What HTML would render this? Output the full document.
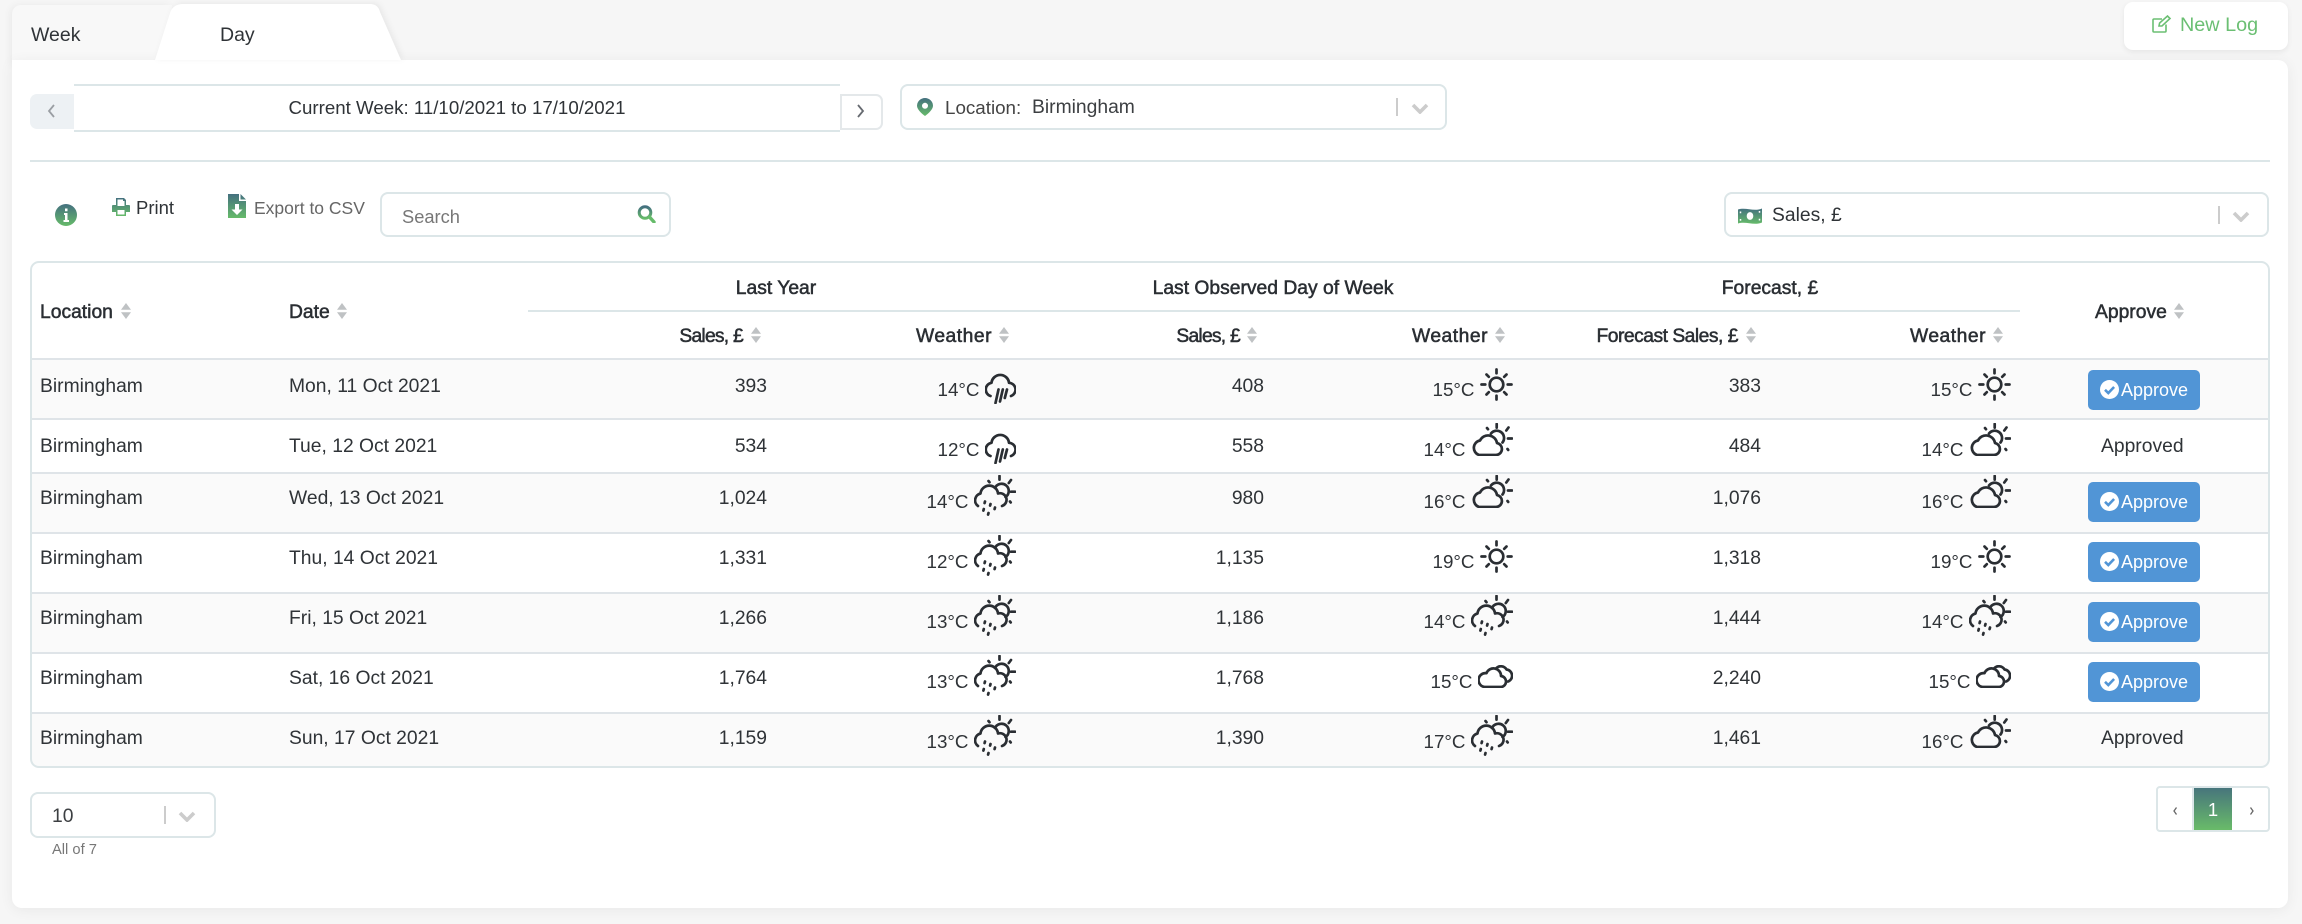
<!DOCTYPE html>
<html lang="en">
<head>
<meta charset="utf-8">
<title>Sales Log</title>
<style>
html,body{margin:0;padding:0}
body{width:2302px;height:924px;position:relative;overflow:hidden;background:#f6f6f6;font-family:"Liberation Sans",sans-serif;color:#2f3337;font-size:19.3px}
.a,.t,.r>*{position:absolute}
.t,.r>span{white-space:nowrap;line-height:24px}
.r{position:absolute;left:0;width:2302px;height:0}
.r>.l{left:40px;top:-17.5px}
.r>.d{left:289px;top:-17.5px}
.r>.n{top:-17.5px}
.r>.c{top:-14px;font-size:18.8px}
.n1{right:1535px}.n2{right:1038px}.n3{right:541px}
.ic{fill:none;stroke:#2a2e33;stroke-width:2.7;stroke-linecap:round;stroke-linejoin:round;overflow:visible}
.rain{top:-19px;width:31px;height:31px}
.sun{top:-24px;width:33px;height:33px}
.cs{top:-29px;width:42px;height:33px}
.rs{top:-29px;width:42px;height:42px}
.cl{top:-19px;width:35px;height:23px}
.btn{left:2088px;top:-22px;width:112px;height:40px;background:#5195d6;border-radius:5px;color:#fff}
.btn svg{position:absolute;left:12px;top:10px;width:19px;height:19px}
.btn b{position:absolute;left:33px;top:8px;font-weight:normal;font-size:18px;line-height:24px}
.ok{left:2101px;top:-17.5px}
.h{font-size:19.3px;-webkit-text-stroke:.5px #2a2e33;color:#2a2e33}
.w{letter-spacing:.5px}
.s{letter-spacing:-.75px}
.line{position:absolute;left:32px;width:2236px;height:2px;background:#dfe4e8}
.bg{position:absolute;left:32px;width:2236px;background:#fafafa}
.box{position:absolute;box-sizing:border-box;border:2px solid #dce6e8;border-radius:8px;background:#fff}
.sep{position:absolute;width:2px;background:#ccc}
.sort{position:absolute;width:12px;height:16px}
</style>
</head>
<body>
<svg width="0" height="0" style="position:absolute">
<defs>
<linearGradient id="g" x1="0" y1="0" x2="0" y2="1"><stop offset="0" stop-color="#44707f"/><stop offset="1" stop-color="#66bb6a"/></linearGradient>
<symbol id="sun" viewBox="0 0 33 33"><circle cx="16.5" cy="16.5" r="6.8"/><path d="M16.5 1.5v3.8M16.5 27.7v3.8M1.5 16.5h3.8M27.700 16.5h3.800M6.500 6.500l2.300 2.300M26.500 6.500l-2.300 2.300M6.500 26.500l2.300-2.300M26.500 26.500l-2.300-2.300"/></symbol>
<symbol id="cs" viewBox="0 0 42 33"><path d="M8 32H25a6 6 0 0 0 1-11.9a9 9 0 0 0-17-2.600a7.500 7.500 0 0 0-1 14.500z"/><path d="M20 10.500A7 7 0 1 1 31.500 19.500"/><path d="M25.700 1v3.600M37.500 4.500l-2.200 3M37 15.500h4M16 5l1 1.200M36.500 26l.7 .9"/></symbol>
<symbol id="rs" viewBox="0 0 42 42"><path d="M4 31A7 7 0 0 1 6.500 18.500A8.800 8.800 0 0 1 24 18.500A6.500 6.500 0 0 1 28 31"/><path d="M21 13A7.200 7.200 0 1 1 31.500 22"/><path d="M25.500 1v3.600M37 5l-2.200 3M37 16.700h4M14.500 6l1 1.200M36 26.500l.7 .9M11 26.500l-.4 1.600M16.500 29l-.4 1.600M21 32.500l-.4 1.600M9.800 34l-.4 1.600M14.500 38l-.4 1.600"/></symbol>
<symbol id="rain" viewBox="0 0 31 31"><path d="M5.500 23A6.800 6.800 0 0 1 6.500 9.800A8.800 8.800 0 0 1 24 9.800A6.800 6.800 0 0 1 26 23"/><path d="M13.500 16.500L10.500 30M17.800 16.500L15 28.500M22 16.500L19.800 25"/></symbol>
<symbol id="cl" viewBox="0 0 35 23"><path d="M6.500 22H22a5.500 5.500 0 0 0 1-11a7.500 7.500 0 0 0-14.500-2.800a6.500 6.500 0 0 0-2 13.800z"/><path d="M18 3.500A6.500 6.500 0 0 1 28.500 4.500A6.200 6.200 0 0 1 30 16.500"/></symbol>
<symbol id="ck" viewBox="0 0 19 19"><circle cx="9.500" cy="9.500" r="9.500" fill="#fff"/><path d="M5 9.800l3.300 3.200 5.800-6" fill="none" stroke="#5195d6" stroke-width="2.600"/></symbol>
<symbol id="so" viewBox="0 0 12 16"><path d="M6 0l5 6.800H1zM6 16l-5-6.800h10z" fill="#bfc2c4"/></symbol>
<symbol id="chev" viewBox="0 0 18 11"><path d="M2 2l7 7 7-7" fill="none" stroke="#ccc" stroke-width="3.600"/></symbol>
</defs>
</svg>

<!-- tabs -->
<div class="a" style="left:12px;top:5px;width:160px;height:60px;background:#f8f8f8;border-radius:9px 0 0 0;box-shadow:-2px 0 8px rgba(0,0,0,.05)"></div>
<!-- card -->
<div class="a" style="left:12px;top:60px;width:2276px;height:848px;background:#fff;border-radius:0 10px 10px 10px;box-shadow:0 2px 14px rgba(0,0,0,.06)"></div>
<svg class="a" style="left:145px;top:0;filter:drop-shadow(2px -1px 3px rgba(0,0,0,.06))" width="270" height="61" viewBox="0 0 270 61"><path d="M10 60L25 13Q28 4 38 4H225Q233 4 235 12L256 60z" fill="#fff"/></svg>
<div class="t" style="left:31px;top:23px;font-size:19.500px">Week</div>
<div class="t" style="left:220px;top:23px;font-size:19.500px">Day</div>

<!-- new log -->
<div class="a" style="left:2124px;top:2px;width:164px;height:48px;background:#fff;border-radius:9px;box-shadow:0 2px 6px rgba(0,0,0,.07)"></div>
<svg class="a" style="left:2152px;top:15px" width="20" height="18" viewBox="0 0 20 18" fill="none" stroke="#6bbf73" stroke-width="1.600"><path d="M14 9.500V16a1 1 0 0 1-1 1H2a1 1 0 0 1-1-1V5a1 1 0 0 1 1-1h8"/><path d="M7 11l.6-3L15.500 1l2.500 2.500L10 11z"/></svg>
<div class="t" style="left:2180px;top:12.500px;font-size:19.800px;color:#6bbf73">New Log</div>

<!-- week nav -->
<div class="a" style="left:30px;top:94px;width:44px;height:35px;background:#edf1f4;border-radius:7px 0 0 7px"></div>
<svg class="a" style="left:46px;top:103px" width="10" height="16" viewBox="0 0 10 16"><path d="M8 2L3 8l5 6" fill="none" stroke="#9a9ea3" stroke-width="1.800"/></svg>
<div class="a" style="left:74px;top:84px;width:766px;height:44px;border-top:2px solid #dce6e8;border-bottom:2px solid #dce6e8"></div>
<div class="t" style="left:74px;width:766px;top:96px;text-align:center;font-size:18.700px">Current Week: 11/10/2021 to 17/10/2021</div>
<div class="a" style="left:840px;top:94px;width:43px;height:36px;box-sizing:border-box;border:2px solid #e4e8ea;border-radius:0 7px 7px 0"></div>
<svg class="a" style="left:856px;top:103px" width="10" height="16" viewBox="0 0 10 16"><path d="M2 2l5 6-5 6" fill="none" stroke="#666a70" stroke-width="1.800"/></svg>

<!-- location select -->
<div class="box" style="left:900px;top:84px;width:547px;height:46px"></div>
<svg class="a" style="left:916px;top:98px" width="18" height="18" viewBox="0 0 18 18"><path fill="url(#g)" fill-rule="evenodd" d="M9 0a8 8 0 0 1 8 7.800c0 3.600-4.500 7.800-8 10.200C5.500 15.600 1 11.400 1 7.800A8 8 0 0 1 9 0zm0 4.800a3 3 0 1 0 .01 0z"/></svg>
<div class="t" style="left:945px;top:96px;font-size:18.800px;color:#444">Location:</div>
<div class="t" style="left:1032px;top:96px;font-size:19.300px;color:#3c3f42">Birmingham</div>
<div class="sep" style="left:1396px;top:98px;height:18px"></div>
<svg class="a" style="left:1411px;top:103px" width="18" height="11"><use href="#chev"/></svg>

<div class="a" style="left:30px;top:160px;width:2240px;height:2px;background:#dce6e8"></div>

<!-- toolbar -->
<svg class="a" style="left:55px;top:204px" width="22" height="22" viewBox="0 0 22 22"><circle cx="11" cy="11" r="11" fill="url(#g)"/><path d="M9 9h3.500v7H14v2H8.500v-2H10v-5H9zM10 4.500h2.500v2.800H10z" fill="#fff"/></svg>
<svg class="a" style="left:112px;top:198px" width="18" height="18" viewBox="0 0 18 18"><path fill="url(#g)" fill-rule="evenodd" d="M4 0h8l2 2v5h3a1 1 0 0 1 1 1v6h-4v4H4v-4H0V8a1 1 0 0 1 1-1h3zm1.500 1.500V8h7V3h-1.500V1.500zM5.500 12v4.500h7V12z"/></svg>
<div class="t" style="left:136px;top:195.500px;font-size:18.500px">Print</div>
<svg class="a" style="left:228px;top:194px" width="18" height="24" viewBox="0 0 18 24"><path fill="url(#g)" fill-rule="evenodd" d="M0 0h11v7h7v17H0zM12.500 0L18 5.500h-5.500zM7 10v5.500H3.500L9 21l5.500-5.500H11V10z"/></svg>
<div class="t" style="left:254px;top:195.500px;font-size:17.500px;color:#666">Export to CSV</div>
<div class="box" style="left:380px;top:192px;width:291px;height:45px"></div>
<div class="t" style="left:402px;top:205px;font-size:18.300px;color:#777">Search</div>
<svg class="a" style="left:637px;top:205px" width="19" height="18" viewBox="0 0 19 18"><circle cx="8" cy="7.500" r="5.800" fill="none" stroke="url(#g)" stroke-width="3"/><path d="M12.500 12l4.500 5" stroke="#66bb6a" stroke-width="3.400" stroke-linecap="round"/></svg>

<div class="box" style="left:1724px;top:192px;width:545px;height:45px"></div>
<svg class="a" style="left:1738px;top:207px" width="24" height="18" viewBox="0 0 24 18"><path fill="url(#g)" d="M0 2.500C8 0 16 5 24 1.500V15.500C16 19 8 14 0 16.500z"/><ellipse cx="12" cy="9" rx="3.300" ry="3.900" fill="#fff"/><path d="M2.500 4.500v1.800M21.500 4v1.800M2.500 12v1.800M21.500 11.700v1.800" stroke="#fff" stroke-width="1.500"/></svg>
<div class="t" style="left:1772px;top:204px;font-size:19.300px">Sales, £</div>
<div class="sep" style="left:2218px;top:206px;height:18px"></div>
<svg class="a" style="left:2232px;top:211px" width="18" height="11"><use href="#chev"/></svg>

<!-- table -->
<div class="bg" style="top:360px;height:58px"></div>
<div class="bg" style="top:474px;height:58px"></div>
<div class="bg" style="top:594px;height:58px"></div>
<div class="bg" style="top:714px;height:52px;border-radius:0 0 7px 7px"></div>
<div class="line" style="top:358px"></div>
<div class="line" style="top:418px"></div>
<div class="line" style="top:472px"></div>
<div class="line" style="top:532px"></div>
<div class="line" style="top:592px"></div>
<div class="line" style="top:652px"></div>
<div class="line" style="top:712px"></div>
<div class="a" style="left:30px;top:261px;width:2240px;height:507px;box-sizing:border-box;border:2px solid #dce6e8;border-radius:9px"></div>
<div class="a" style="left:528px;top:310px;width:1492px;height:2px;background:#dce6e8"></div>

<!-- header -->
<div class="t h" style="left:40px;top:300.500px">Location</div>
<svg class="sort" style="left:120px;top:303px"><use href="#so"/></svg>
<div class="t h" style="left:289px;top:300.500px">Date</div>
<svg class="sort" style="left:336px;top:303px"><use href="#so"/></svg>
<div class="t h" style="left:676px;width:200px;text-align:center;top:277px">Last Year</div>
<div class="t h" style="left:1073px;width:400px;text-align:center;top:277px">Last Observed Day of Week</div>
<div class="t h" style="left:1620px;width:300px;text-align:center;top:277px">Forecast, £</div>
<div class="t h s" style="right:1559px;top:324.500px">Sales, £</div>
<svg class="sort" style="left:750px;top:327px"><use href="#so"/></svg>
<div class="t h w" style="right:1310px;top:324.500px">Weather</div>
<svg class="sort" style="left:998px;top:327px"><use href="#so"/></svg>
<div class="t h s" style="right:1062px;top:324.500px">Sales, £</div>
<svg class="sort" style="left:1246px;top:327px"><use href="#so"/></svg>
<div class="t h w" style="right:814px;top:324.500px">Weather</div>
<svg class="sort" style="left:1494px;top:327px"><use href="#so"/></svg>
<div class="t h" style="right:564px;top:324.500px;letter-spacing:-.5px">Forecast Sales, £</div>
<svg class="sort" style="left:1745px;top:327px"><use href="#so"/></svg>
<div class="t h w" style="right:316px;top:324.500px">Weather</div>
<svg class="sort" style="left:1992px;top:327px"><use href="#so"/></svg>
<div class="t h" style="left:2095px;top:300.500px">Approve</div>
<svg class="sort" style="left:2173px;top:303px"><use href="#so"/></svg>

<!-- rows -->
<div class="r" style="top:392px">
<span class="l">Birmingham</span><span class="d">Mon, 11 Oct 2021</span>
<span class="n n1">393</span><span class="c" style="right:1322.500px">14°C</span><svg class="ic rain" style="right:1286px"><use href="#rain"/></svg>
<span class="n n2">408</span><span class="c" style="right:827.500px">15°C</span><svg class="ic sun" style="right:789px"><use href="#sun"/></svg>
<span class="n n3">383</span><span class="c" style="right:329.500px">15°C</span><svg class="ic sun" style="right:291px"><use href="#sun"/></svg>
<div class="btn"><svg><use href="#ck"/></svg><b>Approve</b></div>
</div>
<div class="r" style="top:452px">
<span class="l">Birmingham</span><span class="d">Tue, 12 Oct 2021</span>
<span class="n n1">534</span><span class="c" style="right:1322.500px">12°C</span><svg class="ic rain" style="right:1286px"><use href="#rain"/></svg>
<span class="n n2">558</span><span class="c" style="right:836.500px">14°C</span><svg class="ic cs" style="right:789px"><use href="#cs"/></svg>
<span class="n n3">484</span><span class="c" style="right:338.500px">14°C</span><svg class="ic cs" style="right:291px"><use href="#cs"/></svg>
<span class="ok">Approved</span>
</div>
<div class="r" style="top:504px">
<span class="l">Birmingham</span><span class="d">Wed, 13 Oct 2021</span>
<span class="n n1">1,024</span><span class="c" style="right:1333.500px">14°C</span><svg class="ic rs" style="right:1286px"><use href="#rs"/></svg>
<span class="n n2">980</span><span class="c" style="right:836.500px">16°C</span><svg class="ic cs" style="right:789px"><use href="#cs"/></svg>
<span class="n n3">1,076</span><span class="c" style="right:338.500px">16°C</span><svg class="ic cs" style="right:291px"><use href="#cs"/></svg>
<div class="btn"><svg><use href="#ck"/></svg><b>Approve</b></div>
</div>
<div class="r" style="top:564px">
<span class="l">Birmingham</span><span class="d">Thu, 14 Oct 2021</span>
<span class="n n1">1,331</span><span class="c" style="right:1333.500px">12°C</span><svg class="ic rs" style="right:1286px"><use href="#rs"/></svg>
<span class="n n2">1,135</span><span class="c" style="right:827.500px">19°C</span><svg class="ic sun" style="right:789px"><use href="#sun"/></svg>
<span class="n n3">1,318</span><span class="c" style="right:329.500px">19°C</span><svg class="ic sun" style="right:291px"><use href="#sun"/></svg>
<div class="btn"><svg><use href="#ck"/></svg><b>Approve</b></div>
</div>
<div class="r" style="top:624px">
<span class="l">Birmingham</span><span class="d">Fri, 15 Oct 2021</span>
<span class="n n1">1,266</span><span class="c" style="right:1333.500px">13°C</span><svg class="ic rs" style="right:1286px"><use href="#rs"/></svg>
<span class="n n2">1,186</span><span class="c" style="right:836.500px">14°C</span><svg class="ic rs" style="right:789px"><use href="#rs"/></svg>
<span class="n n3">1,444</span><span class="c" style="right:338.500px">14°C</span><svg class="ic rs" style="right:291px"><use href="#rs"/></svg>
<div class="btn"><svg><use href="#ck"/></svg><b>Approve</b></div>
</div>
<div class="r" style="top:684px">
<span class="l">Birmingham</span><span class="d">Sat, 16 Oct 2021</span>
<span class="n n1">1,764</span><span class="c" style="right:1333.500px">13°C</span><svg class="ic rs" style="right:1286px"><use href="#rs"/></svg>
<span class="n n2">1,768</span><span class="c" style="right:829.500px">15°C</span><svg class="ic cl" style="right:789px"><use href="#cl"/></svg>
<span class="n n3">2,240</span><span class="c" style="right:331.500px">15°C</span><svg class="ic cl" style="right:291px"><use href="#cl"/></svg>
<div class="btn"><svg><use href="#ck"/></svg><b>Approve</b></div>
</div>
<div class="r" style="top:744px">
<span class="l">Birmingham</span><span class="d">Sun, 17 Oct 2021</span>
<span class="n n1">1,159</span><span class="c" style="right:1333.500px">13°C</span><svg class="ic rs" style="right:1286px"><use href="#rs"/></svg>
<span class="n n2">1,390</span><span class="c" style="right:836.500px">17°C</span><svg class="ic rs" style="right:789px"><use href="#rs"/></svg>
<span class="n n3">1,461</span><span class="c" style="right:338.500px">16°C</span><svg class="ic cs" style="right:291px"><use href="#cs"/></svg>
<span class="ok">Approved</span>
</div>

<!-- page size -->
<div class="box" style="left:30px;top:792px;width:186px;height:46px"></div>
<div class="t" style="left:52px;top:804.500px;font-size:19.300px;color:#3c3f42">10</div>
<div class="sep" style="left:164px;top:806px;height:18px"></div>
<svg class="a" style="left:178px;top:811px" width="18" height="11"><use href="#chev"/></svg>
<div class="t" style="left:52px;top:838px;font-size:14.700px;color:#777">All of 7</div>

<!-- pagination -->
<div class="a" style="left:2156px;top:786px;width:114px;height:46px;box-sizing:border-box;border:2px solid #dce6e8;border-radius:4px;background:#fff"></div>
<div class="a" style="left:2192px;top:788px;width:2px;height:42px;background:#dce6e8"></div>
<div class="a" style="left:2194px;top:788px;width:38px;height:42px;background:linear-gradient(#47757c,#69bb69)"></div>
<div class="t" style="left:2194px;width:38px;top:798px;text-align:center;color:#fff;font-size:18.500px">1</div>
<svg class="a" style="left:2172px;top:806px" width="6" height="10" viewBox="0 0 6 10"><path d="M4.500 1.500L2 5l2.500 3.500" fill="none" stroke="#666" stroke-width="1.300"/></svg>
<svg class="a" style="left:2249px;top:806px" width="6" height="10" viewBox="0 0 6 10"><path d="M1.500 1.500L4 5 1.500 8.500" fill="none" stroke="#666" stroke-width="1.300"/></svg>
</body>
</html>
